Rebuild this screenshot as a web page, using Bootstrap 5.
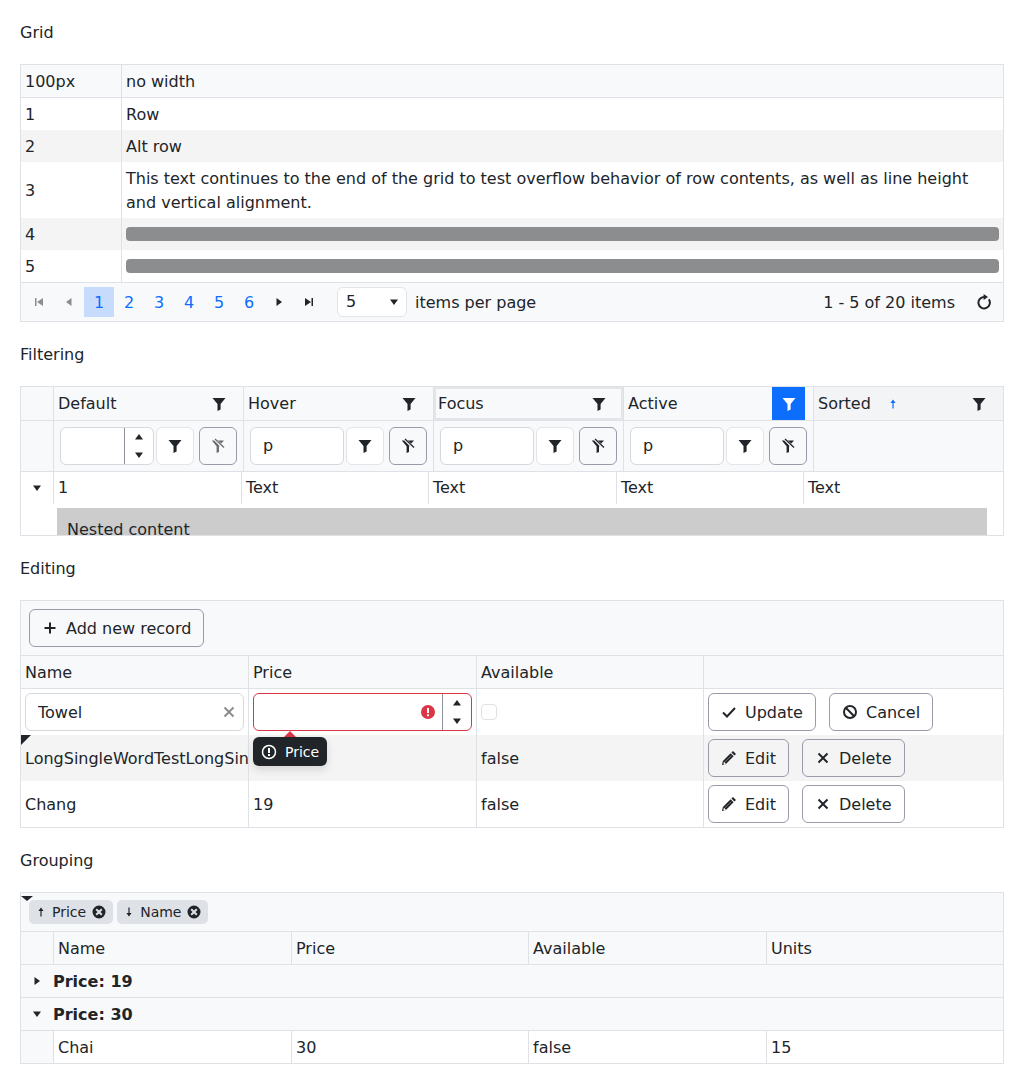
<!doctype html>
<html lang="en">
<head>
<meta charset="utf-8">
<title>Grid</title>
<link href="https://cdn.jsdelivr.net/npm/bootstrap@5.3.0/dist/css/bootstrap.min.css" rel="stylesheet">
<style>
html, body { font-family: "DejaVu Sans", sans-serif; font-size: 16px; color: #212529; }
body { padding: 20px; background: #fff; }
button, input { font-family: inherit; }
.sect-title { margin: 0 0 19px; padding-top: 1px; line-height: 24px; }
.gd { position: relative; border: 1px solid #dee2e6; margin-bottom: 20px; overflow: hidden; background: #fff; }
.gd table { table-layout: fixed; width: 982px; border-collapse: separate; border-spacing: 0; margin: 0; }
.gd th, .gd td { padding: 5px 4px 3px; border: 0; font-weight: 400; line-height: 24px; color: #212529; box-shadow: none; background: transparent; vertical-align: middle; }
.gd td.ctl-cell, .gd .nest-body td { padding: 4px; }
.gd .bl { border-left: 1px solid #dee2e6; }
.gd .bb { border-bottom: 1px solid #dee2e6; }
.gd thead th { background: #f8f9fa; }
.gd .alt td { background: #f4f4f4; }
.gd .mid46 td { height: 46px; }
.bar-skel { height: 14px; border-radius: 4px; background: #8c8d8f; margin: 0 0 2px; }
.tbar { background: #f8f9fa; border-bottom: 1px solid #dee2e6; }
.pagerbar { background: #f8f9fa; border-top: 1px solid #dee2e6; height: 39px; padding: 4px 8px 4px 3px; }
.pagerbar .tx { padding-top: 2px; }
.pgr .page-item .page-link { width: 30px; height: 30px; padding: 0; border: 0; border-radius: 0; background: transparent; color: #0d6efd; display: flex; align-items: center; justify-content: center; line-height: 30px; margin: 0; }
.pgr .page-item .page-link.num { padding-top: 2px; line-height: 24px; }
.pgr .page-item.active .page-link { background: #c7dcfc; color: #0d6efd; }
.pgr .page-item.disabled .page-link { opacity: .5; color: #212529; background: transparent; }
.pgr .page-item .arrow-link { color: #212529; }
.pagesize { width: 70px; height: 30px; border: 1px solid #e2e5e8; border-radius: 6px; background: #fff; padding: 0 8px; margin-left: 13px; margin-right: 8px; }
.gd th.fcell { padding: 0 8px 0 4px; height: 33px; }
.hbtn { width: 33px; height: 33px; border: 0; padding: 0; background: transparent; color: #212529; border-radius: 0; }
.hbtn.on { background: #0d6efd; color: #fff; }
.gd th.focuscell { box-shadow: inset 0 0 0 2px #e3e5e8; }
.gd th.sortedcell { background: #f3f4f6; }
.gd td.fl-cell { background: #f8f9fa; padding: 6px; height: 50px; }
.fl-input { width: 94px; flex: none; }
.form-control { border-color: #d5d8dc; }
.sq-btn { width: 38px; height: 38px; padding: 0; flex: none; display: inline-flex; align-items: center; justify-content: center; }
.btn-soft { border-color: #e1e4e8; background: #fff; }
.btn-line { border-color: #9a9aab; background: #f8f9fa; color: #212529; }
.icon-dim { color: #6c6d70; }
.btn-rec { border-color: #9a9aab; color: #212529; background: transparent; display: inline-flex; align-items: center; gap: 8px; height: 38px; padding-top: 0; padding-bottom: 0; }
.btn-rec span { padding-top: 2px; }
.spin-wrap { position: relative; height: 38px; border: 1px solid #d5d8dc; border-radius: 6px; background: #fff; display: flex; }
.spin-arrows { width: 29px; border-left: 1px solid #8f8f9b; display: flex; flex-direction: column; align-items: center; justify-content: space-around; flex: none; }
.spin-body { flex: 1; min-width: 0; display: flex; align-items: center; justify-content: flex-end; padding-right: 6px; }
.spin-wrap.bad { border-color: #dc3545; }
.nest-body { height: 63px; overflow: hidden; }
.nested { background: #ccc; margin: 4px 0 0 36px; width: 930px; padding: 10px; height: 80px; line-height: 24px; }
.cell-clear { position: absolute; right: 11px; top: 50%; transform: translateY(-50%); color: #8a8c8e; display: flex; }
.towel { padding: 7px 30px 5px 12px; }
.gd td.rel-cell { position: relative; overflow: visible; }
.gd td.clip-cell { position: relative; overflow: hidden; white-space: nowrap; }
.dirty { position: absolute; left: 0; top: 0; width: 0; height: 0; border-top: 10px solid #212529; border-right: 10px solid transparent; }
.tip-err { position: absolute; left: 4px; top: 48px; z-index: 5; height: 29px; width: 74px; background: #212529; color: #fff; border-radius: 6px; font-size: 14px; line-height: 20px; padding: 0 8px; box-shadow: 0 4px 8px rgba(0,0,0,.12); gap: 8px; }
.tip-err::before { content: ""; position: absolute; left: 31px; top: -6px; border-left: 6px solid transparent; border-right: 6px solid transparent; border-bottom: 6px solid #dc3545; }
.chk { appearance: none; width: 16px; height: 16px; border: 1px solid #dee2e6; border-radius: 4px; background: #fff; margin: 0; display: block; }
.act-row { gap: 13px; }
.drop-mark { position: absolute; left: 0; top: 3px; width: 0; height: 0; border-top: 5px solid #212529; border-left: 6px solid transparent; border-right: 6px solid transparent; z-index: 2; }
.chip { height: 24px; background: #dee2e6; border-radius: 5px; font-size: 14px; line-height: 24px; padding: 0 7px 0 4px; }
.chip .up { width: 16px; margin-right: 3px; display: flex; justify-content: center; }
.chip .xo { margin-left: 6px; display: flex; }
.chip-row { height: 39px; padding: 0 8px; gap: 4px; }
.gd td.gr-arrow { text-align: center; padding: 4px 0; background: #f8f9fa; }
.gd td.gr-text { background: #f8f9fa; padding-left: 0; font-weight: 700; }
.gd td.gr-indent { background: #f8f9fa; }
.cap { display: block; margin: 0 auto; }
.gap-l2 { margin-left: 2px; }
.gap-l5 { margin-left: 5px; }
.pager-reload { margin-left: 21px; margin-right: 3px; }
.sort-ar { margin-left: 14px; }
</style>
</head>
<body>
<svg width="0" height="0" class="position-absolute" aria-hidden="true">
  <symbol id="i-filter" viewBox="0 0 16 16"><path fill="currentColor" d="M1.5 2h13L9.6 8v5.4L6.5 15V8z"/></symbol>
  <symbol id="i-clearf" viewBox="0 0 16 16"><path fill="currentColor" d="M1.8 2.5h2.4L9.6 8l-.6.8V14l-2.4 1V8.2z"/><path fill="none" stroke="currentColor" stroke-width="1.2" d="M5 1l9 8.5"/><path fill="currentColor" d="M7.8 2.5H14l-2.7 3z"/></symbol>
  <symbol id="i-up" viewBox="0 0 8 8"><path fill="currentColor" d="M4 1 8 6.5H0z"/></symbol>
  <symbol id="i-down" viewBox="0 0 8 8"><path fill="currentColor" d="M0 1.5h8L4 7z"/></symbol>
  <symbol id="i-right" viewBox="0 0 8 8"><path fill="currentColor" d="M1.5 0 7 4 1.5 8z"/></symbol>
  <symbol id="i-left" viewBox="0 0 8 8"><path fill="currentColor" d="M6.5 0 1 4l5.5 4z"/></symbol>
  <symbol id="i-first" viewBox="0 0 10 10"><path fill="currentColor" d="M1 1h1.5v8H1zM9 1 3 5l6 4z"/></symbol>
  <symbol id="i-last" viewBox="0 0 10 10"><path fill="currentColor" d="M9 1H7.5v8H9zM1 1l6 4-6 4z"/></symbol>
  <symbol id="i-refresh" viewBox="0 0 16 16"><path fill="none" stroke="currentColor" stroke-width="2" d="M8 3A5.7 5.7 0 1 0 12.8 5.4"/><path fill="currentColor" d="M7.6 0v6l4.4-3z"/></symbol>
  <symbol id="i-plus" viewBox="0 0 16 16"><path fill="currentColor" d="M7 2.5h2V7h4.5v2H9v4.5H7V9H2.5V7H7z"/></symbol>
  <symbol id="i-check" viewBox="0 0 16 16"><path fill="none" stroke="currentColor" stroke-width="2" d="M2 8.5l4 4 8-8.5"/></symbol>
  <symbol id="i-cancel" viewBox="0 0 16 16"><circle cx="8" cy="8" r="6" fill="none" stroke="currentColor" stroke-width="2"/><path stroke="currentColor" stroke-width="2" d="M3.8 3.8l8.4 8.4"/></symbol>
  <symbol id="i-pencil" viewBox="0 0 16 16"><path fill="currentColor" fill-rule="evenodd" d="M12 1l3 3-1.6 1.6-3-3zM9.6 3.3l3 3-7.7 7.7-4 1 1-4zM3 11.5l-.6 2.1.9.9 2-.6-1.3-1z"/><path stroke="#fff" stroke-opacity=".55" stroke-width=".7" d="M3.4 12.4 10.3 5.6"/></symbol>
  <symbol id="i-x" viewBox="0 0 16 16"><path fill="currentColor" d="M4.2 2.8 8 6.6l3.8-3.8 1.4 1.4L9.4 8l3.8 3.8-1.4 1.4L8 9.4l-3.8 3.8-1.4-1.4L6.6 8 2.8 4.2z"/></symbol>
  <symbol id="i-err" viewBox="0 0 16 16"><path fill="#dc3545" fill-rule="evenodd" d="M8 1a7 7 0 1 1 0 14A7 7 0 0 1 8 1zM7 4v5h2V4zM7 10.2v2h2v-2z"/></symbol>
  <symbol id="i-excl" viewBox="0 0 16 16"><circle cx="8" cy="8" r="6.5" fill="none" stroke="currentColor" stroke-width="1.5"/><path fill="currentColor" d="M7 4h2v5H7zM7 10h2v2H7z"/></symbol>
  <symbol id="i-xo" viewBox="0 0 14 14"><path fill="currentColor" fill-rule="evenodd" d="M7 .5a6.5 6.5 0 1 1 0 13 6.5 6.5 0 0 1 0-13zM4.9 3.5 3.5 4.9 5.6 7 3.5 9.1l1.4 1.4L7 8.4l2.1 2.1 1.4-1.4L8.4 7l2.1-2.1-1.4-1.4L7 5.6z"/></symbol>
  <symbol id="i-thinup2" viewBox="0 0 16 16"><path fill="currentColor" d="M8 3.5l2.6 3.6H8.6v5.4H7.4V7.1H5.4z"/></symbol>
  <symbol id="i-thindown2" viewBox="0 0 16 16"><path fill="currentColor" d="M8 12.5l2.6-3.6H8.6V3.5H7.4v5.4H5.4z"/></symbol>
</svg>

<p class="sect-title">Grid</p>
<div class="gd">
  <table class="table">
    <colgroup><col style="width:100px"><col></colgroup>
    <thead><tr><th class="bb">100px</th><th class="bb bl">no width</th></tr></thead>
    <tbody>
      <tr><td>1</td><td class="bl">Row</td></tr>
      <tr class="alt"><td>2</td><td class="bl">Alt row</td></tr>
      <tr><td>3</td><td class="bl">This text continues to the end of the grid to test overflow behavior of row contents, as well as line height and vertical alignment.</td></tr>
      <tr class="alt"><td>4</td><td class="bl"><div class="bar-skel"></div></td></tr>
      <tr><td>5</td><td class="bl"><div class="bar-skel"></div></td></tr>
    </tbody>
  </table>
  <div class="pagerbar d-flex align-items-center">
    <ul class="pagination pgr mb-0">
      <li class="page-item disabled"><a class="page-link" href="#"><svg width="10" height="10"><use href="#i-first"/></svg></a></li>
      <li class="page-item disabled"><a class="page-link" href="#"><svg width="8" height="8"><use href="#i-left"/></svg></a></li>
      <li class="page-item active"><a class="page-link num" href="#">1</a></li>
      <li class="page-item"><a class="page-link num" href="#">2</a></li>
      <li class="page-item"><a class="page-link num" href="#">3</a></li>
      <li class="page-item"><a class="page-link num" href="#">4</a></li>
      <li class="page-item"><a class="page-link num" href="#">5</a></li>
      <li class="page-item"><a class="page-link num" href="#">6</a></li>
      <li class="page-item"><a class="page-link arrow-link" href="#"><svg width="8" height="8"><use href="#i-right"/></svg></a></li>
      <li class="page-item"><a class="page-link arrow-link" href="#"><svg width="10" height="10"><use href="#i-last"/></svg></a></li>
    </ul>
    <div class="pagesize d-flex align-items-center justify-content-between"><span>5</span><svg width="8" height="8"><use href="#i-down"/></svg></div>
    <span class="tx">items per page</span>
    <span class="ms-auto tx">1 - 5 of 20 items</span>
    <svg width="16" height="16" class="pager-reload"><use href="#i-refresh"/></svg>
  </div>
</div>

<p class="sect-title">Filtering</p>
<div class="gd">
  <table class="table">
    <colgroup><col style="width:32px"><col style="width:190px"><col style="width:190px"><col style="width:190px"><col style="width:190px"><col style="width:190px"></colgroup>
    <thead>
      <tr>
        <th class="bb"></th>
        <th class="bb bl fcell"><div class="d-flex align-items-center justify-content-between"><span>Default</span><button class="hbtn" type="button"><svg width="16" height="16" class="cap"><use href="#i-filter"/></svg></button></div></th>
        <th class="bb bl fcell"><div class="d-flex align-items-center justify-content-between"><span>Hover</span><button class="hbtn" type="button"><svg width="16" height="16" class="cap"><use href="#i-filter"/></svg></button></div></th>
        <th class="bb bl fcell focuscell"><div class="d-flex align-items-center justify-content-between"><span>Focus</span><button class="hbtn" type="button"><svg width="16" height="16" class="cap"><use href="#i-filter"/></svg></button></div></th>
        <th class="bb bl fcell"><div class="d-flex align-items-center justify-content-between"><span>Active</span><button class="hbtn on" type="button"><svg width="16" height="16" class="cap"><use href="#i-filter"/></svg></button></div></th>
        <th class="bb bl fcell sortedcell"><div class="d-flex align-items-center"><span>Sorted</span><svg width="16" height="16" class="text-primary sort-ar"><use href="#i-thinup2"/></svg><button class="hbtn ms-auto" type="button"><svg width="16" height="16" class="cap"><use href="#i-filter"/></svg></button></div></th>
      </tr>
      <tr>
        <td class="fl-cell bb"></td>
        <td class="fl-cell bb bl"><div class="d-flex"><div class="spin-wrap fl-input"><div class="spin-body"></div><div class="spin-arrows"><svg width="8" height="8"><use href="#i-up"/></svg><svg width="8" height="8"><use href="#i-down"/></svg></div></div><button class="btn btn-soft sq-btn gap-l2" type="button"><svg width="16" height="16"><use href="#i-filter"/></svg></button><button class="btn btn-line sq-btn gap-l5" type="button"><svg width="16" height="16" class="icon-dim"><use href="#i-clearf"/></svg></button></div></td>
        <td class="fl-cell bb bl"><div class="d-flex"><input class="form-control fl-input" value="p" aria-label="Hover"><button class="btn btn-soft sq-btn gap-l2" type="button"><svg width="16" height="16"><use href="#i-filter"/></svg></button><button class="btn btn-line sq-btn gap-l5" type="button"><svg width="16" height="16"><use href="#i-clearf"/></svg></button></div></td>
        <td class="fl-cell bb bl"><div class="d-flex"><input class="form-control fl-input" value="p" aria-label="Focus"><button class="btn btn-soft sq-btn gap-l2" type="button"><svg width="16" height="16"><use href="#i-filter"/></svg></button><button class="btn btn-line sq-btn gap-l5" type="button"><svg width="16" height="16"><use href="#i-clearf"/></svg></button></div></td>
        <td class="fl-cell bb bl"><div class="d-flex"><input class="form-control fl-input" value="p" aria-label="Active"><button class="btn btn-soft sq-btn gap-l2" type="button"><svg width="16" height="16"><use href="#i-filter"/></svg></button><button class="btn btn-line sq-btn gap-l5" type="button"><svg width="16" height="16"><use href="#i-clearf"/></svg></button></div></td>
        <td class="fl-cell bb bl"></td>
      </tr>
    </thead>
  </table>
  <div class="nest-body">
    <table class="table">
      <colgroup><col style="width:32px"><col style="width:188px"><col style="width:187px"><col style="width:188px"><col style="width:187px"><col style="width:200px"></colgroup>
      <tbody><tr><td class="text-center"><svg width="8" height="8" class="cap"><use href="#i-down"/></svg></td><td class="bl">1</td><td class="bl">Text</td><td class="bl">Text</td><td class="bl">Text</td><td class="bl">Text</td></tr></tbody>
    </table>
    <div class="nested">Nested content</div>
  </div>
</div>

<p class="sect-title">Editing</p>
<div class="gd">
  <div class="tbar p-2"><button class="btn btn-rec" type="button"><svg width="16" height="16"><use href="#i-plus"/></svg><span>Add new record</span></button></div>
  <table class="table">
    <colgroup><col style="width:227px"><col style="width:228px"><col style="width:227px"><col style="width:300px"></colgroup>
    <thead><tr><th class="bb">Name</th><th class="bb bl">Price</th><th class="bb bl">Available</th><th class="bb bl"></th></tr></thead>
    <tbody>
      <tr class="mid46">
        <td class="rel-cell ctl-cell"><input class="form-control towel" value="Towel" aria-label="Name"><span class="cell-clear"><svg width="16" height="16"><use href="#i-x"/></svg></span></td>
        <td class="bl rel-cell ctl-cell"><div class="spin-wrap bad"><div class="spin-body"><svg width="16" height="16"><use href="#i-err"/></svg></div><div class="spin-arrows"><svg width="8" height="8"><use href="#i-up"/></svg><svg width="8" height="8"><use href="#i-down"/></svg></div></div>
          <div class="tip-err d-flex align-items-center" role="tooltip"><svg width="16" height="16" class="flex-shrink-0"><use href="#i-excl"/></svg><span>Price</span></div></td>
        <td class="bl ctl-cell"><input type="checkbox" class="chk" aria-label="Available"></td>
        <td class="bl ctl-cell"><div class="d-flex act-row"><button class="btn btn-rec" type="button"><svg width="16" height="16"><use href="#i-check"/></svg><span>Update</span></button><button class="btn btn-rec" type="button"><svg width="16" height="16"><use href="#i-cancel"/></svg><span>Cancel</span></button></div></td>
      </tr>
      <tr class="alt mid46">
        <td class="clip-cell"><span class="dirty"></span>LongSingleWordTestLongSingleWord</td>
        <td class="bl"></td>
        <td class="bl">false</td>
        <td class="bl ctl-cell"><div class="d-flex act-row"><button class="btn btn-rec" type="button"><svg width="16" height="16"><use href="#i-pencil"/></svg><span>Edit</span></button><button class="btn btn-rec" type="button"><svg width="16" height="16"><use href="#i-x"/></svg><span>Delete</span></button></div></td>
      </tr>
      <tr class="mid46">
        <td class="clip-cell">Chang</td>
        <td class="bl">19</td>
        <td class="bl">false</td>
        <td class="bl ctl-cell"><div class="d-flex act-row"><button class="btn btn-rec" type="button"><svg width="16" height="16"><use href="#i-pencil"/></svg><span>Edit</span></button><button class="btn btn-rec" type="button"><svg width="16" height="16"><use href="#i-x"/></svg><span>Delete</span></button></div></td>
      </tr>
    </tbody>
  </table>
</div>

<p class="sect-title">Grouping</p>
<div class="gd mb-0">
  <span class="drop-mark"></span>
  <div class="tbar d-flex align-items-center chip-row">
    <span class="chip d-flex align-items-center"><span class="up"><svg width="16" height="16"><use href="#i-thinup2"/></svg></span>Price<span class="xo"><svg width="14" height="14"><use href="#i-xo"/></svg></span></span>
    <span class="chip d-flex align-items-center"><span class="up"><svg width="16" height="16"><use href="#i-thindown2"/></svg></span>Name<span class="xo"><svg width="14" height="14"><use href="#i-xo"/></svg></span></span>
  </div>
  <table class="table">
    <colgroup><col style="width:32px"><col style="width:238px"><col style="width:237px"><col style="width:238px"><col style="width:237px"></colgroup>
    <thead><tr><th class="bb"></th><th class="bb bl">Name</th><th class="bb bl">Price</th><th class="bb bl">Available</th><th class="bb bl">Units</th></tr></thead>
    <tbody>
      <tr><td class="gr-arrow bb"><svg width="8" height="8" class="cap"><use href="#i-right"/></svg></td><td class="gr-text bb" colspan="4">Price: 19</td></tr>
      <tr><td class="gr-arrow bb"><svg width="8" height="8" class="cap"><use href="#i-down"/></svg></td><td class="gr-text bb" colspan="4">Price: 30</td></tr>
      <tr><td class="gr-indent"></td><td class="bl">Chai</td><td class="bl">30</td><td class="bl">false</td><td class="bl">15</td></tr>
    </tbody>
  </table>
</div>
<script src="https://cdn.jsdelivr.net/npm/bootstrap@5.3.0/dist/js/bootstrap.bundle.min.js"></script>
</body>
</html>
